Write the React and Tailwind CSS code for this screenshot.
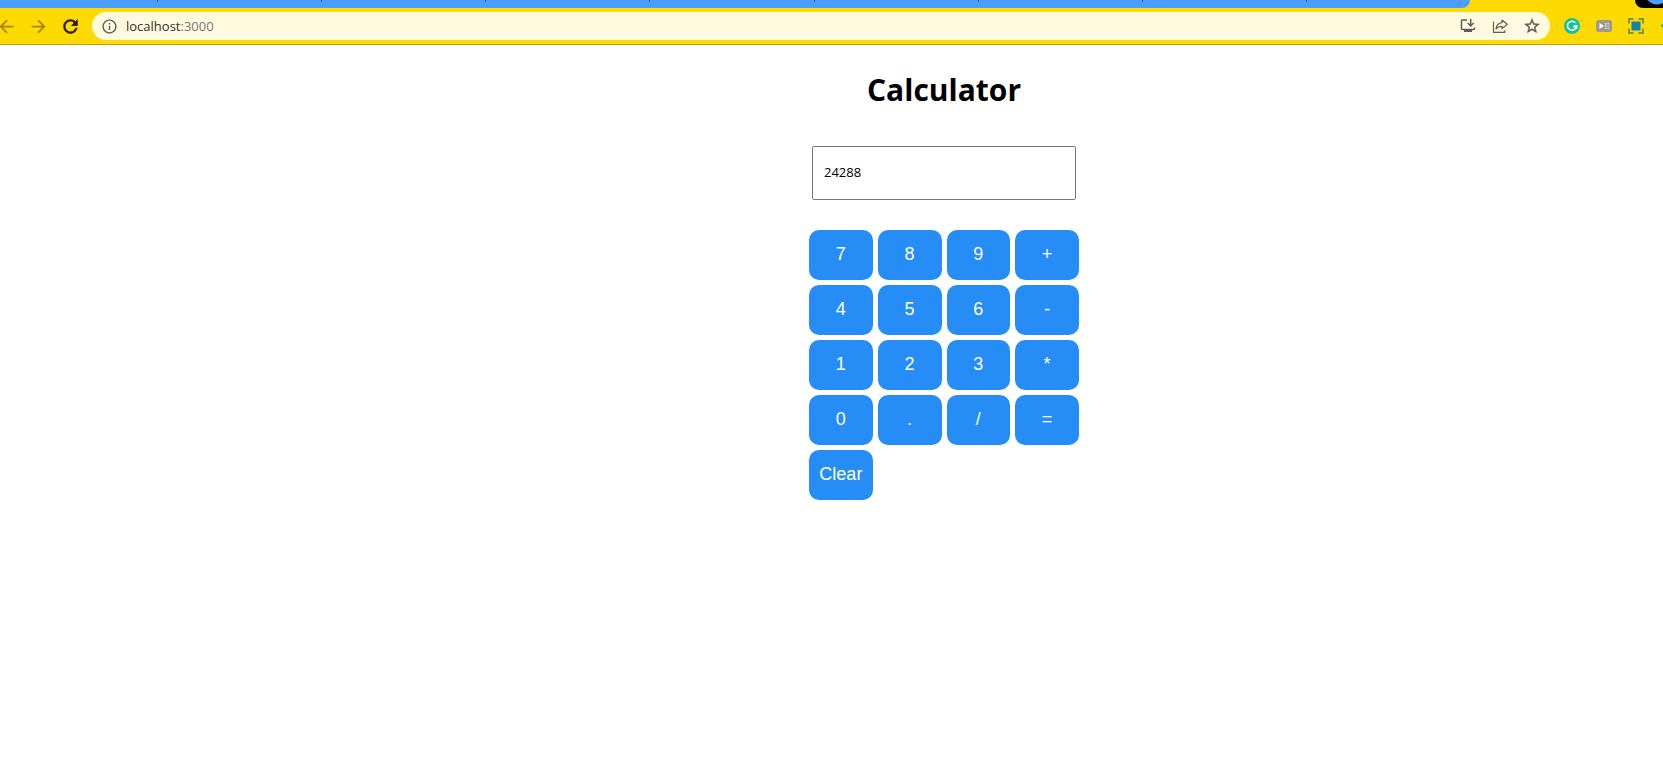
import { useState } from "react";
import { MdArrowBack, MdArrowForward, MdInfoOutline } from "react-icons/md";

const KEYS = ["7", "8", "9", "+", "4", "5", "6", "-", "1", "2", "3", "*", "0", ".", "/", "=", "Clear"];
const TABS = [0, 1, 2, 3, 4, 5, 6, 7];

function ToolButton({ label, className = "", children }) {
  return (
    <button type="button" aria-label={label} className={`flex h-7 w-8 shrink-0 items-center justify-center ${className}`}>
      {children}
    </button>
  );
}

function ReloadIcon() {
  return (
    <svg width="21" height="21" viewBox="0 0 24 24" fill="currentColor" stroke="currentColor" strokeWidth="0.6">
      <path d="M17.650 6.350A7.958 7.958 0 0 0 12 4c-4.420 0-7.990 3.580-7.990 8s3.570 8 7.990 8c3.730 0 6.840-2.550 7.730-6h-2.080A5.990 5.990 0 0 1 12 18c-3.310 0-6-2.690-6-6s2.690-6 6-6c1.660 0 3.140.69 4.220 1.780L13 11h7V4l-2.350 2.350z" />
    </svg>
  );
}

function StarIcon() {
  return (
    <svg width="18" height="18" viewBox="0 0 24 24" fill="currentColor" stroke="currentColor" strokeWidth="0.5">
      <path d="m22 9.240-7.190-.62L12 2 9.190 8.630 2 9.240l5.460 4.730L5.820 21 12 17.270 18.180 21l-1.630-7.030L22 9.240zM12 15.400l-3.760 2.270 1-4.280-3.320-2.880 4.380-.38L12 6.100l1.710 4.040 4.380.38-3.320 2.880 1 4.280L12 15.400z" />
    </svg>
  );
}

function InstallIcon() {
  return (
    <svg width="16" height="16" viewBox="0 0 16 16" fill="none" stroke="currentColor" strokeWidth="1.5">
      <path d="M7 2H2.200a.7.7 0 0 0-.7.7v8.100c0 .4.3.7.7.7h11.600c.4 0 .7-.3.7-.7V9.500" />
      <path d="M10.700 1v6.500M7.700 5l3 3 3-3" />
      <path d="M4 11.500h8V14H4z" fill="currentColor" stroke="none" />
    </svg>
  );
}

function ShareIcon() {
  return (
    <svg width="16" height="16" viewBox="0 0 16 16" fill="none" stroke="currentColor" strokeWidth="1.200" strokeLinejoin="round">
      <path d="M1.500 3.500v10.800h11.300v-2" />
      <path d="M10 2l5.200 4.300L10 10.600V8.300C7.300 8.300 5.500 9 4 11c.4-3.500 2.400-6 6-6.400z" />
    </svg>
  );
}

function GrammarIcon() {
  return (
    <svg width="16" height="16" viewBox="0 0 16 16">
      <circle cx="8" cy="8" r="8" fill="#15c39a" />
      <path d="M11.300 4.700A4.500 4.500 0 1 0 12.400 8.500H9" fill="none" stroke="#fff" strokeWidth="1.500" />
      <path d="M10.200 7.800h2.600v2.900" fill="none" stroke="#fff" strokeWidth="1.200" />
    </svg>
  );
}

function PlayerIcon() {
  return (
    <svg width="16" height="12" viewBox="0 0 16 12">
      <rect width="16" height="12" rx="2.500" fill="#9f9a90" />
      <path d="M3.500 3v6l4.500-3z" fill="#fff" />
      <path d="M9 3h1.500v1.500H9zM9 5.300h1.500v1.500H9zM9 7.600h1.500v1.500H9zM11.500 3h1.500v1.200h-1.500zM11.500 5.400h1.500v1.200h-1.500zM11.500 7.800h1.500V9h-1.500z" fill="#e6e2d8" />
    </svg>
  );
}

function CaptureIcon() {
  return (
    <svg width="16" height="16" viewBox="0 0 16 16">
      <path d="M1 5.500V1h4.500M10.500 1H15v4.500M15 10.500V15h-4.500M5.500 15H1v-4.500" fill="none" stroke="#4c8a4a" strokeWidth="1.500" />
      <rect x="3.500" y="3.500" width="9" height="9" fill="#1680b4" />
    </svg>
  );
}

function BrowserBar() {
  return (
    <header className="overflow-hidden border-b border-[#b89f1c] bg-[#ffda00]">
      <div className="flex h-2 justify-between">
        <div className="mr-[165px] flex flex-1 rounded-br-lg bg-[#4c9dfe]">
          <span className="w-[157px] shrink-0" />
          {TABS.map((tab) => (
            <span key={tab} className="h-0.5 flex-1 border-l border-[#2b5f9e]" />
          ))}
        </div>
        <div className="flex w-7 shrink-0 overflow-hidden rounded-bl-lg bg-black">
          <svg width="28" height="8" viewBox="0 0 28 8">
            <circle cx="22" cy="-8" r="12.500" fill="#4c9dfe" />
          </svg>
        </div>
      </div>
      <div className="-mr-[21px] -ml-2.5 flex items-center py-1">
        <ToolButton label="Back" className="text-[#a68500]">
          <MdArrowBack size={21} />
        </ToolButton>
        <ToolButton label="Forward" className="text-[#a68500]">
          <MdArrowForward size={21} />
        </ToolButton>
        <ToolButton label="Reload" className="text-[#2a1a00]">
          <ReloadIcon />
        </ToolButton>
        <div className="mx-1.5 flex h-7 flex-1 items-center rounded-full bg-[#fffae0] pl-[9px] text-[#5f5c50]">
          <MdInfoOutline size={17} />
          <div className="flex-1 pl-2 font-['Open_Sans',sans-serif] text-[13px] leading-5 text-[#33322c]">
            localhost<span className="text-[#77756a]">:3000</span>
          </div>
          <ToolButton label="Install app">
            <InstallIcon />
          </ToolButton>
          <ToolButton label="Share page">
            <ShareIcon />
          </ToolButton>
          <ToolButton label="Bookmark" className="mr-0.5">
            <StarIcon />
          </ToolButton>
        </div>
        <ToolButton label="Writing assistant">
          <GrammarIcon />
        </ToolButton>
        <ToolButton label="Media player">
          <PlayerIcon />
        </ToolButton>
        <ToolButton label="Screen capture">
          <CaptureIcon />
        </ToolButton>
        <ToolButton label="Extension">
          <svg width="16" height="16" viewBox="0 0 16 16">
            <path d="M1 6.500l4 0v5L1.500 8.500z" fill="#1fae1f" />
          </svg>
        </ToolButton>
      </div>
    </header>
  );
}

export default function App() {
  const [value, setValue] = useState("24288");

  const press = (key) => {
    if (key === "Clear") {
      setValue("");
    } else if (key === "=") {
      try {
        setValue(String(Function(`return (${value})`)()));
      } catch {
        setValue("Error");
      }
    } else {
      setValue(value + key);
    }
  };

  return (
    <div className="min-h-screen bg-white">
      <BrowserBar />
      <main className="flex flex-col items-center pt-[23px] pl-[225px]">
        <h1 className="font-['Open_Sans',sans-serif] text-[30px] leading-[44px] font-bold text-black">Calculator</h1>
        <input
          type="text"
          aria-label="Result"
          value={value}
          onChange={(event) => setValue(event.target.value)}
          className="mt-[34px] h-[54px] w-[264px] rounded-xs border border-[#767676] px-[11px] pb-0.5 font-['Open_Sans',sans-serif] text-[13px] text-black"
        />
        <div className="mt-[30px] grid w-[270px] grid-cols-4 gap-[5px]">
          {KEYS.map((key) => (
            <button
              key={key}
              type="button"
              onClick={() => press(key)}
              className="h-[50px] rounded-[10px] bg-[#268df7] pb-0.5 font-['Liberation_Sans',Arial,sans-serif] text-[18px] text-white"
            >
              {key}
            </button>
          ))}
        </div>
      </main>
    </div>
  );
}
